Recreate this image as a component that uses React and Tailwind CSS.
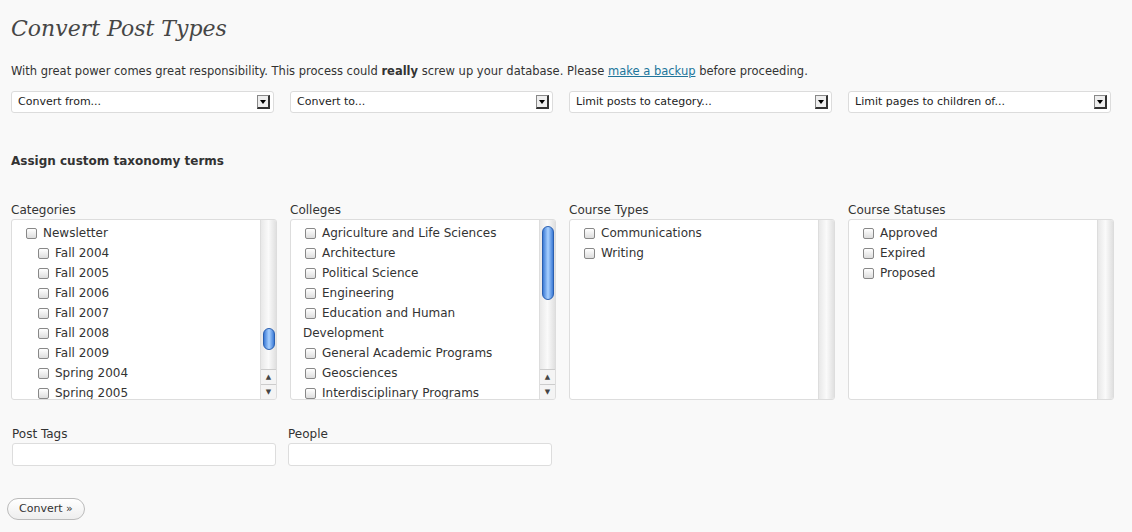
const F = { fontFamily: '"DejaVu Sans", sans-serif' };

function Sel({ label }) {
  return (
    <div className="w-[263px] h-[22px] bg-white border border-[#dcdcdc] rounded-[3px] flex items-center justify-between pl-[6px] pr-[3px] text-[11px] text-[#222]">
      <span>{label}</span>
      <div className="w-[13px] h-[14px] border border-[#888] border-r-2 border-b-2 border-r-[#333] border-b-[#333] bg-[#eee] flex items-center justify-center">
        <div className="w-0 h-0 border-l-[3px] border-r-[3px] border-t-[4px] border-l-transparent border-r-transparent border-t-black" />
      </div>
    </div>
  );
}

function CB() {
  return <span className="inline-block w-[11px] h-[11px] border border-[#888] rounded-[2px] bg-gradient-to-b from-white to-[#ddd] mr-[6px] shrink-0" />;
}

function Scroll({ thumb }) {
  return (
    <div className="w-[16px] h-full border-l border-[#ddd] bg-gradient-to-r from-[#e8e8e8] via-[#fafafa] to-[#e0e0e0] flex flex-col relative">
      {thumb && (
        <div className="absolute left-[2px] w-[12px] rounded-[6px] bg-gradient-to-r from-[#3c7bd6] via-[#a9d1ff] to-[#3c7bd6] border border-[#2a5fb0]" style={{ top: thumb[0], height: thumb[1] }} />
      )}
      {thumb && (
        <div className="absolute bottom-0 left-0 w-full text-[7px] text-[#444] leading-[14px] text-center bg-[#f4f4f4]">
          <div className="border-t border-[#ccc]">▲</div>
          <div className="border-t border-[#ccc]">▼</div>
        </div>
      )}
    </div>
  );
}

function Box({ label, items, thumb }) {
  return (
    <div className="w-[266px]">
      <div className="text-[12px] text-[#333] h-[14px] leading-[14px] mb-[2px]">{label}</div>
      <div className="h-[181px] bg-white border border-[#ddd] rounded-[3px] flex overflow-hidden">
        <div className="flex-1 pt-[3px] text-[12px] text-[#333]">
          {items.map((it, i) => (
            <div key={i} className="h-[20px] flex items-center" style={{ paddingLeft: it[1] }}>
              {it[2] !== false && <CB />}
              <span>{it[0]}</span>
            </div>
          ))}
        </div>
        <Scroll thumb={thumb} />
      </div>
    </div>
  );
}

export default function App() {
  return (
    <div className="w-[1132px] h-[532px] bg-[#f9f9f9] px-[11px] overflow-hidden" style={F}>
      <h1 className="pt-[14px] text-[22px] italic text-[#464646] leading-[30px] h-[30px]" style={{ fontFamily: 'Georgia, "DejaVu Serif", serif' }}>Convert Post Types</h1>
      <p className="mt-[33px] text-[11.5px] text-[#333] leading-[16px]">
        With great power comes great responsibility. This process could <b>really</b> screw up your database. Please <a className="text-[#21759b] underline">make a backup</a> before proceeding.
      </p>
      <div className="mt-[12px] flex gap-[16px]">
        <Sel label="Convert from..." />
        <Sel label="Convert to..." />
        <Sel label="Limit posts to category..." />
        <Sel label="Limit pages to children of..." />
      </div>
      <div className="mt-[39px] text-[12px] font-bold text-[#333] h-[16px]">Assign custom taxonomy terms</div>
      <div className="mt-[35px] flex gap-[13px]">
        <Box label="Categories" thumb={[108, 22]} items={[["Newsletter", 14], ["Fall 2004", 26], ["Fall 2005", 26], ["Fall 2006", 26], ["Fall 2007", 26], ["Fall 2008", 26], ["Fall 2009", 26], ["Spring 2004", 26], ["Spring 2005", 26]]} />
        <Box label="Colleges" thumb={[6, 74]} items={[["Agriculture and Life Sciences", 14], ["Architecture", 14], ["Political Science", 14], ["Engineering", 14], ["Education and Human", 14], ["Development", 12, false], ["General Academic Programs", 14], ["Geosciences", 14], ["Interdisciplinary Programs", 14]]} />
        <Box label="Course Types" items={[["Communications", 14], ["Writing", 14]]} />
        <Box label="Course Statuses" items={[["Approved", 14], ["Expired", 14], ["Proposed", 14]]} />
      </div>
      <div className="mt-[27px] flex gap-[12px] pl-[1px]">
        {["Post Tags", "People"].map((l) => (
          <div key={l} className="w-[264px]">
            <div className="text-[12px] text-[#333] h-[14px] leading-[14px] mb-[2px]">{l}</div>
            <div className="h-[23px] bg-white border border-[#ddd] rounded-[3px]" />
          </div>
        ))}
      </div>
      <button className="mt-[32px] -ml-[4px] h-[22px] px-[11px] rounded-full border border-[#bbb] bg-gradient-to-b from-white to-[#eee] text-[11px] text-[#333]">Convert »</button>
    </div>
  );
}
